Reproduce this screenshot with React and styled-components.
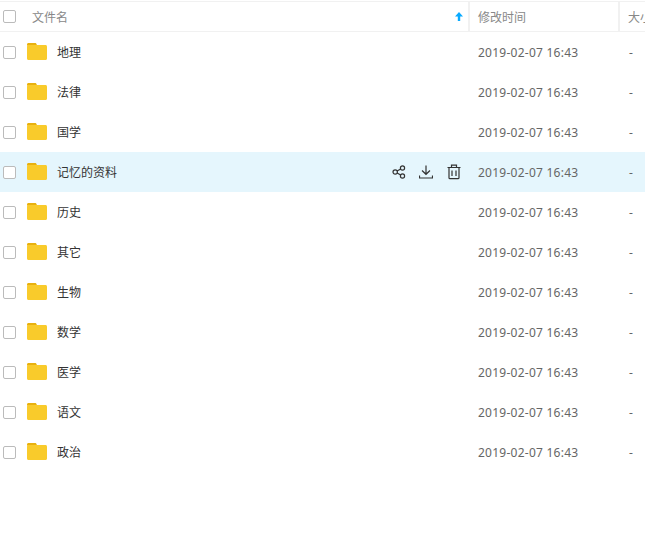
import React from 'react';
import styled, { createGlobalStyle } from 'styled-components';

const GlobalStyle = createGlobalStyle`
  html, body {
    margin: 0;
    padding: 0;
    background: #fff;
    overflow: hidden;
    font-family: "Noto Sans", "Noto Sans CJK SC", sans-serif;
  }
`;

const Table = styled.div`
  width: 645px;
  height: 558px;
  overflow: hidden;
  padding-top: 1px;
  box-sizing: border-box;
`;

const columns = '470px 150px 60px';

const Header = styled.div`
  display: grid;
  grid-template-columns: ${columns};
  height: 29px;
  border-top: 1px solid #f1f1f1;
  border-bottom: 1px solid #f1f1f1;
`;

const HeadCell = styled.div`
  display: flex;
  align-items: center;
  padding-left: 8px;
  font-size: 12px;
  color: #888;
  border-right: 2px solid #f1f1f1;
  box-sizing: border-box;
`;

const NameHead = styled(HeadCell)`
  padding-left: 3px;
  justify-content: space-between;
  padding-right: 5px;
`;

const HeadLabel = styled.span`
  margin-left: 16px;
  flex: 1;
`;

const Check = styled.span`
  display: block;
  flex: none;
  width: 11px;
  height: 11px;
  border: 1px solid #bbb;
  border-radius: 2px;
  background: #fff;
`;

const Row = styled.div`
  display: grid;
  grid-template-columns: ${columns};
  height: 40px;
  align-items: center;
  background: ${(p) => (p.$active ? '#e5f6fd' : 'transparent')};
`;

const NameCell = styled.div`
  display: flex;
  align-items: center;
  padding-left: 3px;
  height: 100%;
`;

const FolderWrap = styled.span`
  display: flex;
  margin-left: 11px;
  flex: none;
`;

const FileName = styled.span`
  margin-left: 10px;
  flex: 1;
  font-size: 12px;
  color: #333;
`;

const Actions = styled.div`
  display: flex;
  align-items: center;
  gap: 13px;
  margin-right: 8px;
`;

const Time = styled.div`
  padding-left: 8px;
  font-size: 12px;
  letter-spacing: 0.25px;
  color: #666;
`;

const Size = styled(Time)`
  padding-left: 9px;
`;

const Folder = () => (
  <svg width="20" height="18" viewBox="0 0 20 18">
    <path d="M0 3V1.500C0 .6.600 0 1.500 0H8c1 0 1.500.5 2 2.200H1z" fill="#e9b10f" />
    <path d="M0 3.500C0 2.600.7 2 1.500 2H18.500C19.400 2 20 2.600 20 3.500V15.500c0 .9-.6 1.500-1.500 1.500H1.500C.6 17 0 16.400 0 15.500z" fill="#f9cb2b" />
  </svg>
);

const ShareIcon = () => (
  <svg width="14" height="14" viewBox="0 0 14 14" fill="none" stroke="#333" strokeWidth="1.200">
    <circle cx="3.200" cy="7" r="2.200" />
    <circle cx="10.500" cy="3" r="2.100" />
    <circle cx="10.500" cy="11" r="2.100" />
    <path d="M5.100 5.900l3.600-2M5.100 8.100l3.600 2" />
  </svg>
);

const DownloadIcon = () => (
  <svg width="14" height="14" viewBox="0 0 14 14" fill="none" stroke="#333" strokeWidth="1.200">
    <path d="M7 .5v8.500M3 5.500L7 9.300l4-3.800M.5 10.500v2.500h13v-2.500" />
  </svg>
);

const TrashIcon = () => (
  <svg width="16" height="16" viewBox="0 0 16 16" fill="none" stroke="#333" strokeWidth="1.200">
    <path d="M1.500 3.500h13M5.500 3.300V1.200h5v2.100M3 3.500v10.200c0 .6.400 1 1 1h8c.6 0 1-.4 1-1V3.500M6 6.500v5.500M10 6.500v5.500" />
  </svg>
);

const UpArrow = () => (
  <svg width="8" height="9" viewBox="0 0 8 9">
    <path d="M4 0l4 4.500H5.200V9H2.800V4.500H0z" fill="#09aaff" />
  </svg>
);

const files = ['地理', '法律', '国学', '记忆的资料', '历史', '其它', '生物', '数学', '医学', '语文', '政治'];

export default function App() {
  return (
    <Table>
      <GlobalStyle />
      <Header>
        <NameHead>
          <Check />
          <HeadLabel>文件名</HeadLabel>
          <UpArrow />
        </NameHead>
        <HeadCell>修改时间</HeadCell>
        <HeadCell>大小</HeadCell>
      </Header>
      {files.map((name) => {
        const active = name === '记忆的资料';
        return (
          <Row key={name} $active={active}>
            <NameCell>
              <Check />
              <FolderWrap><Folder /></FolderWrap>
              <FileName>{name}</FileName>
              {active && (
                <Actions>
                  <ShareIcon />
                  <DownloadIcon />
                  <TrashIcon />
                </Actions>
              )}
            </NameCell>
            <Time>2019-02-07 16:43</Time>
            <Size>-</Size>
          </Row>
        );
      })}
    </Table>
  );
}
